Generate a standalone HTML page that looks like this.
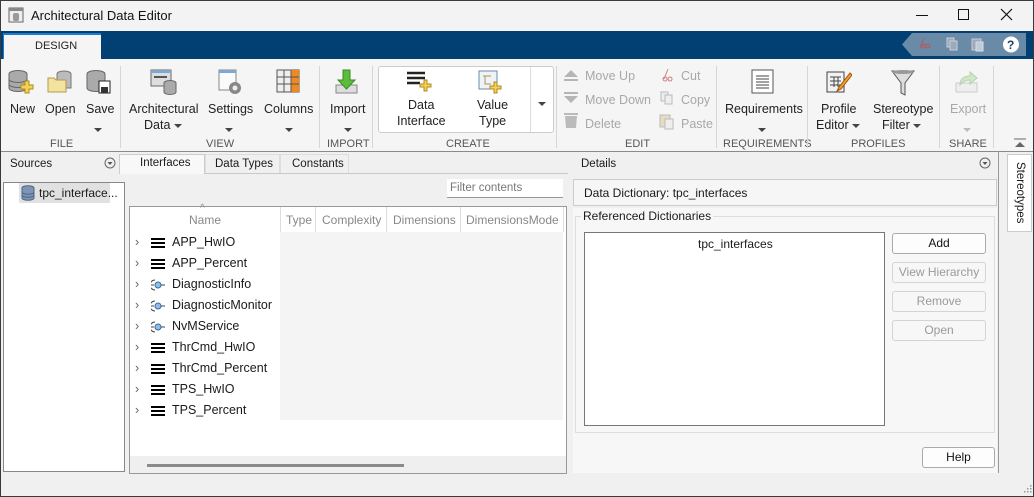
<!DOCTYPE html>
<html><head><meta charset="utf-8"><style>
*{box-sizing:border-box;margin:0;padding:0}
body{width:1034px;height:497px;overflow:hidden;background:#f0f0f0;font-family:"Liberation Sans",sans-serif;font-size:12px;color:#1a1a1a;position:relative}
.a{position:absolute}
.t{position:absolute;white-space:nowrap}
.rb{font-size:12.5px;color:#222;text-align:center}
.lbl{font-size:11px;color:#555;text-align:center}
.dis{color:#a8a8a8}
.sep{position:absolute;top:66px;width:1px;height:82px;background:#d6d6d6}
.arr{display:inline-block;width:0;height:0;border-left:4px solid transparent;border-right:4px solid transparent;border-top:4px solid #444;vertical-align:middle}
.btn{position:absolute;left:892px;width:94px;height:21px;border:1px solid #d4d4d4;border-radius:3px;background:#f7f7f7;text-align:center;line-height:19px;color:#9a9a9a}
.row{position:absolute;left:135px;height:20px;line-height:20px;font-size:12.5px;color:#1a1a1a}
.chev{display:inline-block;width:10px;color:#666}
.ham{display:inline-block;width:14px;height:10px;vertical-align:middle;margin:0 7px 0 6px;background:linear-gradient(#000 0 2px,transparent 2px 4px,#000 4px 6px,transparent 6px 8px,#000 8px 10px)}
.svc{display:inline-block;width:14px;margin:0 7px 0 6px;vertical-align:middle}
</style></head><body>
<div class="a" style="left:0;top:0;width:1034px;height:497px;border:1px solid #3a3a3a;z-index:9;pointer-events:none"></div>
<div class="a" style="left:1px;top:1px;width:1032px;height:30px;background:#f3f3f3"></div>
<svg class="a" style="left:8px;top:7px" width="16" height="16"><rect x="1" y="1" width="14" height="14" fill="#eee" stroke="#666"/><rect x="1" y="1" width="14" height="3" fill="#888"/><rect x="5" y="6" width="6" height="8" rx="2" fill="#999"/></svg>
<div class="t" style="left:31px;top:8px;font-size:13px;color:#111">Architectural Data Editor</div>
<div class="a" style="left:916px;top:15px;width:12px;height:1px;background:#111"></div>
<div class="a" style="left:958px;top:9px;width:11px;height:11px;border:1px solid #111"></div>
<svg class="a" style="left:1000px;top:8px" width="13" height="13"><path d="M1 1L12 12M12 1L1 12" stroke="#111" stroke-width="1.2"/></svg>
<div class="a" style="left:1px;top:31px;width:1032px;height:28px;background:#023f72"></div>
<div class="a" style="left:3px;top:33px;width:98px;height:26px;background:#f5f5f5;border-top:2px solid #1e7ad0;border-left:1px solid #1e7ad0"></div>
<div class="t" style="left:35px;top:40px;font-size:11px;color:#222">DESIGN</div>
<svg class="a" style="left:902px;top:33px" width="124" height="23"><path d="M10 0H124V23H10L0 11.5Z" fill="#6a8ba8"/><path d="M22 5l-4 10M22 15a2 2 0 1 1 0.1 0M26 15a2 2 0 1 1 0.1 0" stroke="#b8555a" fill="none"/><rect x="45" y="5" width="7" height="9" fill="#9ab" stroke="#ccd"/><rect x="48" y="8" width="7" height="9" fill="#9ab" stroke="#ccd"/><rect x="70" y="6" width="9" height="11" fill="#9ab" stroke="#ccd"/><rect x="74" y="9" width="7" height="9" fill="#bcd" stroke="#ddd"/><circle cx="109" cy="11.5" r="8" fill="#fff"/><text x="105" y="16" font-size="12" font-weight="bold" fill="#1a3f66" font-family="Liberation Sans">?</text></svg>
<div class="a" style="left:1px;top:59px;width:1032px;height:93px;background:#f5f5f5;border-bottom:1px solid #8a8a8a"></div>
<svg class="a" style="left:8px;top:69px" width="26" height="26"><g fill="#aaa" stroke="#666"><ellipse cx="10" cy="5" rx="9" ry="3.5"/><path d="M1 5v14c0 2 4 3.5 9 3.5s9-1.5 9-3.5V5"/><path d="M1 10c0 2 4 3.5 9 3.5s9-1.5 9-3.5M1 15c0 2 4 3.5 9 3.5s9-1.5 9-3.5" fill="none"/></g><path d="M17 12h4v4h4v4h-4v4h-4v-4h-4v-4h4z" fill="#f5d250" stroke="#b08a20"/></svg>
<svg class="a" style="left:47px;top:69px" width="26" height="26"><g fill="#bbb" stroke="#777"><ellipse cx="17" cy="5" rx="7" ry="3"/><path d="M10 5v14h14V5"/></g><path d="M1 9h6l2 2h10v12H1z" fill="#f3e3a0" stroke="#b39a50"/></svg>
<svg class="a" style="left:86px;top:69px" width="26" height="26"><g fill="#aaa" stroke="#666"><ellipse cx="10" cy="5" rx="9" ry="3.5"/><path d="M1 5v14c0 2 4 3.5 9 3.5s9-1.5 9-3.5V5"/></g><rect x="13" y="12" width="11" height="12" fill="#fff" stroke="#222"/><rect x="15" y="18" width="7" height="6" fill="#333"/></svg>
<div class="t rb" style="left:10px;top:102px">New</div>
<div class="t rb" style="left:45px;top:102px">Open</div>
<div class="t rb" style="left:86px;top:102px">Save</div>
<div class="t" style="left:94px;top:122px"><span class="arr"></span></div>
<div class="t lbl" style="left:50px;top:138px">FILE</div>
<div class="sep" style="left:120px"></div>
<svg class="a" style="left:150px;top:69px" width="28" height="28"><rect x="1" y="1" width="20" height="16" fill="#ddd" stroke="#666"/><rect x="1" y="1" width="20" height="3" fill="#7fa7d0"/><rect x="4" y="7" width="13" height="2" fill="#555"/><g fill="#aaa" stroke="#666"><ellipse cx="20" cy="14" rx="6" ry="2.5"/><path d="M14 14v9c0 1.5 3 2.5 6 2.5s6-1 6-2.5v-9"/></g></svg>
<svg class="a" style="left:218px;top:69px" width="26" height="28"><rect x="1" y="1" width="17" height="20" fill="#fafafa" stroke="#888"/><rect x="1" y="1" width="17" height="3" fill="#7fa7d0"/><circle cx="17" cy="19" r="6" fill="#888"/><circle cx="17" cy="19" r="2.5" fill="#eee"/></svg>
<svg class="a" style="left:276px;top:69px" width="24" height="24"><rect x="1" y="1" width="22" height="22" fill="#eee" stroke="#555"/><rect x="15" y="1" width="8" height="22" fill="#f08a20"/><path d="M1 8h22M1 15h22M8 1v22M15 1v22" stroke="#555"/></svg>
<div class="t rb" style="left:129px;top:102px">Architectural</div>
<div class="t rb" style="left:144px;top:118px">Data <span class="arr"></span></div>
<div class="t rb" style="left:208px;top:102px">Settings</div>
<div class="t" style="left:225px;top:122px"><span class="arr"></span></div>
<div class="t rb" style="left:264px;top:102px">Columns</div>
<div class="t" style="left:285px;top:122px"><span class="arr"></span></div>
<div class="t lbl" style="left:206px;top:138px">VIEW</div>
<div class="sep" style="left:319px"></div>
<svg class="a" style="left:334px;top:69px" width="26" height="26"><rect x="2" y="16" width="21" height="8" fill="#ddd" stroke="#888"/><path d="M9 1h7v10h5l-8.5 9L4 11h5z" fill="#5cbd3c" stroke="#3a8a24"/></svg>
<div class="t rb" style="left:330px;top:102px">Import</div>
<div class="t" style="left:344px;top:122px"><span class="arr"></span></div>
<div class="t lbl" style="left:327px;top:138px">IMPORT</div>
<div class="sep" style="left:372px"></div>
<div class="a" style="left:378px;top:66px;width:176px;height:67px;background:#fff;border:1px solid #ccc;border-radius:3px"></div>
<div class="a" style="left:530px;top:67px;width:1px;height:65px;background:#ddd"></div>
<div class="t" style="left:538px;top:96px"><span class="arr"></span></div>
<svg class="a" style="left:406px;top:71px" width="26" height="22"><path d="M1 2h18M1 7h18M1 12h13" stroke="#222" stroke-width="2.5"/><path d="M18 9h3v4h4v3h-4v4h-3v-4h-4v-3h4z" fill="#f5d250" stroke="#b08a20"/></svg>
<svg class="a" style="left:478px;top:70px" width="26" height="26"><rect x="1" y="1" width="18" height="18" fill="#eef3f8" stroke="#6b8bab"/><path d="M5 6h8M7 6v8h6" stroke="#b0954a" fill="none"/><path d="M16 12h3v4h4v3h-4v4h-3v-4h-4v-3h4z" fill="#f5d250" stroke="#b08a20"/></svg>
<div class="t rb" style="left:408px;top:98px">Data</div>
<div class="t rb" style="left:397px;top:114px">Interface</div>
<div class="t rb" style="left:477px;top:98px">Value</div>
<div class="t rb" style="left:479px;top:114px">Type</div>
<div class="t lbl" style="left:446px;top:138px">CREATE</div>
<div class="sep" style="left:556px"></div>
<svg class="a" style="left:563px;top:68px" width="16" height="62"><path d="M1 9L8 2l7 7z M1 11h14v2H1z" fill="#b5b5b5"/><path d="M1 24h14v2H1zM1 28h14L8 35z" fill="#b5b5b5"/><path d="M2 48h12l-1 12H3z M1 45h14v2H1z" fill="#bbb"/></svg>
<div class="t rb dis" style="left:585px;top:69px">Move Up</div>
<div class="t rb dis" style="left:585px;top:93px">Move Down</div>
<div class="t rb dis" style="left:585px;top:117px">Delete</div>
<svg class="a" style="left:659px;top:68px" width="16" height="62"><path d="M9 1L5 11M6 13a2 2 0 1 1 0.1 0M11 13a2 2 0 1 1 0.1 0" stroke="#d08080" fill="none"/><rect x="2" y="24" width="7" height="9" fill="#eee" stroke="#bbb"/><rect x="6" y="27" width="7" height="9" fill="#eee" stroke="#bbb"/><rect x="1" y="47" width="10" height="12" fill="#e8dcc0" stroke="#bbb"/><rect x="6" y="51" width="8" height="10" fill="#eee" stroke="#bbb"/></svg>
<div class="t rb dis" style="left:681px;top:69px">Cut</div>
<div class="t rb dis" style="left:681px;top:93px">Copy</div>
<div class="t rb dis" style="left:681px;top:117px">Paste</div>
<div class="t lbl" style="left:625px;top:138px">EDIT</div>
<div class="sep" style="left:716px"></div>
<svg class="a" style="left:751px;top:69px" width="24" height="26"><rect x="1" y="1" width="21" height="23" fill="#fff" stroke="#555"/><path d="M5 7h13M5 10h13M5 13h13M5 16h13M5 19h13" stroke="#444"/></svg>
<div class="t rb" style="left:725px;top:102px">Requirements</div>
<div class="t" style="left:758px;top:122px"><span class="arr"></span></div>
<div class="t lbl" style="left:723px;top:138px">REQUIREMENTS</div>
<div class="sep" style="left:807px"></div>
<svg class="a" style="left:826px;top:69px" width="26" height="26"><rect x="1" y="3" width="17" height="20" fill="#f2f2f2" stroke="#444"/><path d="M4 8h11M4 12h11M4 16h11M8 8v10M12 8v10" stroke="#444"/><path d="M24 4L13 18l-2 4 4-2L26 6z" fill="#f0a030" stroke="#a05010"/></svg>
<svg class="a" style="left:891px;top:69px" width="24" height="28"><path d="M1 2h22L14 14v12l-4-2V14z" fill="#ddd" stroke="#555"/><ellipse cx="12" cy="3" rx="11" ry="2" fill="#999"/></svg>
<div class="t rb" style="left:821px;top:102px">Profile</div>
<div class="t rb" style="left:816px;top:118px">Editor <span class="arr"></span></div>
<div class="t rb" style="left:873px;top:102px">Stereotype</div>
<div class="t rb" style="left:882px;top:118px">Filter <span class="arr"></span></div>
<div class="t lbl" style="left:851px;top:138px">PROFILES</div>
<div class="sep" style="left:939px"></div>
<svg class="a" style="left:954px;top:69px" width="26" height="26"><rect x="2" y="14" width="21" height="9" fill="#eee" stroke="#ccc"/><path d="M6 16c0-6 4-9 10-9V3l7 6-7 6v-4c-4 0-7 1-10 5z" fill="#cfe8c8" stroke="#b8d0b0"/></svg>
<div class="t rb dis" style="left:950px;top:102px">Export</div>
<div class="t" style="left:963px;top:122px"><span class="arr" style="border-top-color:#bbb"></span></div>
<div class="t lbl" style="left:949px;top:138px">SHARE</div>
<div class="sep" style="left:993px"></div>
<svg class="a" style="left:1014px;top:138px" width="12" height="10"><path d="M0 1h12" stroke="#666"/><path d="M1 9L6 4l5 5z" fill="#666"/></svg>

<div class="t" style="left:10px;top:158px;font-size:11.5px">Sources</div>
<svg class="a" style="left:104px;top:157px" width="12" height="12"><circle cx="6" cy="6" r="5" fill="none" stroke="#666"/><path d="M3.5 5h5L6 8z" fill="#555"/></svg>
<div class="a" style="left:3px;top:182px;width:122px;height:290px;background:#fff;border:1px solid #888"></div>
<div class="a" style="left:19px;top:183px;width:91px;height:20px;background:#e1e1e1"></div>
<svg class="a" style="left:21px;top:185px" width="14" height="16"><g fill="#7d96b5" stroke="#4d6585"><ellipse cx="7" cy="3" rx="6" ry="2.3"/><path d="M1 3v10c0 1.3 2.7 2.3 6 2.3s6-1 6-2.3V3"/><path d="M1 7c0 1.3 2.7 2.3 6 2.3s6-1 6-2.3M1 10c0 1.3 2.7 2.3 6 2.3s6-1 6-2.3" fill="none"/></g></svg>
<div class="t" style="left:39px;top:186px;font-size:12px">tpc_interface...</div>
<div class="a" style="left:128px;top:173px;width:440px;height:1px;background:#c8c8c8"></div>
<div class="a" style="left:119px;top:154px;width:86px;height:20px;background:#f8f8f8;border:1px solid #ccc;border-bottom:none"></div>
<div class="a" style="left:205px;top:154px;width:75px;height:19px;border:1px solid #ddd;border-bottom:none"></div>
<div class="a" style="left:280px;top:154px;width:69px;height:19px;border:1px solid #ddd;border-bottom:none"></div>
<div class="t" style="left:140px;top:157px;font-size:11.5px">Interfaces</div>
<div class="t" style="left:215px;top:158px;font-size:11.5px">Data Types</div>
<div class="t" style="left:292px;top:158px;font-size:11.5px">Constants</div>
<div class="a" style="left:447px;top:179px;width:116px;height:19px;background:#fff;border-bottom:1px solid #999"></div>
<div class="t" style="left:450px;top:182px;font-size:11.5px;color:#777">Filter contents</div>
<div class="a" style="left:129px;top:206px;width:438px;height:268px;background:#fff;border:1px solid #999"></div>
<div class="a" style="left:280px;top:232px;width:283px;height:188px;background:#f4f4f4"></div>
<div class="a" style="left:130px;top:456px;width:436px;height:17px;background:#efefef"></div>
<div class="a" style="left:147px;top:464px;width:257px;height:3px;background:#8a8a8a"></div>
<div class="t" style="left:200px;top:203px;font-size:10px;color:#888">^</div>
<div class="t" style="left:189px;top:213px;font-size:12px;color:#888">Name</div>
<div class="a" style="left:280px;top:207px;width:1px;height:25px;background:#ddd"></div>
<div class="t" style="left:286px;top:213px;font-size:12px;color:#888">Type</div>
<div class="a" style="left:315px;top:207px;width:1px;height:25px;background:#ddd"></div>
<div class="t" style="left:322px;top:213px;font-size:12px;color:#888">Complexity</div>
<div class="a" style="left:386px;top:207px;width:1px;height:25px;background:#ddd"></div>
<div class="t" style="left:393px;top:213px;font-size:12px;color:#888">Dimensions</div>
<div class="a" style="left:460px;top:207px;width:1px;height:25px;background:#ddd"></div>
<div class="t" style="left:466px;top:213px;font-size:12px;color:#888">DimensionsMode</div>
<div class="a" style="left:563px;top:207px;width:1px;height:25px;background:#ddd"></div>

<div class="row" style="top:232px"><span class="chev">›</span><span class="ham"></span>APP_HwIO</div>
<div class="row" style="top:253px"><span class="chev">›</span><span class="ham"></span>APP_Percent</div>
<div class="row" style="top:274px"><span class="chev">›</span><svg class="svc" width="14" height="12"><path d="M4 1a5 5 0 0 0 0 10M0 6h3" stroke="#444" fill="none"/><circle cx="7" cy="6" r="3" fill="#8fbfe8" stroke="#3a6a9a"/><path d="M10 6h4" stroke="#444"/></svg>DiagnosticInfo</div>
<div class="row" style="top:295px"><span class="chev">›</span><svg class="svc" width="14" height="12"><path d="M4 1a5 5 0 0 0 0 10M0 6h3" stroke="#444" fill="none"/><circle cx="7" cy="6" r="3" fill="#8fbfe8" stroke="#3a6a9a"/><path d="M10 6h4" stroke="#444"/></svg>DiagnosticMonitor</div>
<div class="row" style="top:316px"><span class="chev">›</span><svg class="svc" width="14" height="12"><path d="M4 1a5 5 0 0 0 0 10M0 6h3" stroke="#444" fill="none"/><circle cx="7" cy="6" r="3" fill="#8fbfe8" stroke="#3a6a9a"/><path d="M10 6h4" stroke="#444"/></svg>NvMService</div>
<div class="row" style="top:337px"><span class="chev">›</span><span class="ham"></span>ThrCmd_HwIO</div>
<div class="row" style="top:358px"><span class="chev">›</span><span class="ham"></span>ThrCmd_Percent</div>
<div class="row" style="top:379px"><span class="chev">›</span><span class="ham"></span>TPS_HwIO</div>
<div class="row" style="top:400px"><span class="chev">›</span><span class="ham"></span>TPS_Percent</div>

<div class="a" style="left:568px;top:152px;width:431px;height:321px;border-right:1px solid #999"></div>
<div class="t" style="left:581px;top:158px;font-size:11.5px">Details</div>
<svg class="a" style="left:979px;top:157px" width="12" height="12"><circle cx="6" cy="6" r="5" fill="none" stroke="#666"/><path d="M3.5 5h5L6 8z" fill="#555"/></svg>
<div class="a" style="left:573px;top:179px;width:424px;height:27px;background:#f6f6f6;border:1px solid #ccc"></div>
<div class="t" style="left:584px;top:186px;font-size:12px">Data Dictionary: tpc_interfaces</div>
<div class="a" style="left:573px;top:208px;width:424px;height:265px;background:#f7f7f7"></div>
<div class="a" style="left:575px;top:216px;width:420px;height:217px;border:1px solid #ddd"></div>
<div class="t" style="left:581px;top:209px;font-size:12px;background:#f7f7f7;padding:0 2px">Referenced Dictionaries</div>
<div class="a" style="left:584px;top:232px;width:301px;height:194px;background:#fff;border:1px solid #777"></div>
<div class="t" style="left:698px;top:237px;font-size:12px">tpc_interfaces</div>
<div class="btn" style="top:233px;color:#111;border-color:#aaa;background:#fdfdfd">Add</div>
<div class="btn" style="top:262px">View Hierarchy</div>
<div class="btn" style="top:291px">Remove</div>
<div class="btn" style="top:320px">Open</div>
<div class="a" style="left:922px;top:447px;width:73px;height:21px;border:1px solid #aaa;border-radius:3px;background:#fdfdfd;text-align:center;line-height:19px;color:#111">Help</div>

<div class="a" style="left:1007px;top:154px;width:25px;height:78px;background:#fff;border:1px solid #ccc"></div>
<div class="t" style="left:1026px;top:162px;transform:rotate(90deg);transform-origin:0 0;font-size:11.5px">Stereotypes</div>
<svg class="a" style="left:1024px;top:485px" width="8" height="8"><g fill="#999"><rect x="6" y="0" width="1.5" height="1.5"/><rect x="3" y="3" width="1.5" height="1.5"/><rect x="6" y="3" width="1.5" height="1.5"/><rect x="0" y="6" width="1.5" height="1.5"/><rect x="3" y="6" width="1.5" height="1.5"/><rect x="6" y="6" width="1.5" height="1.5"/></g></svg>
</body></html>
